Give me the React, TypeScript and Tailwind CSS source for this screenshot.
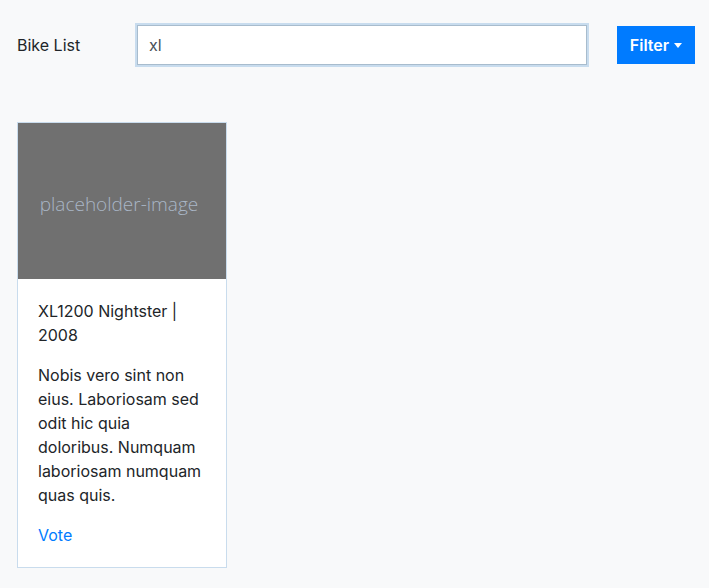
export default function App() {
  return (
    <div className="min-h-screen bg-[#f8f9fa] text-[#212529] font-['Inter',sans-serif] text-base leading-6">
      {/* Top bar */}
      <div className="flex items-center px-[17px] pt-[23px]">
        <span className="w-[118px] shrink-0">Bike List</span>
        <div className="w-[454px] h-[44px] shrink-0 p-[2px] bg-[#c8dcee]">
          <input
            className="w-full h-full bg-white border border-[#a8bccd] px-[11px] outline-none text-[#495057]"
            defaultValue="xl"
          />
        </div>
        <button className="ml-[28px] w-[78px] h-[38px] shrink-0 bg-[#007bff] text-white font-semibold flex items-center justify-center gap-[5px]">
          Filter
          <span className="w-0 h-0 border-x-[4px] border-x-transparent border-t-[5px] border-t-white" />
        </button>
      </div>

      {/* Cards */}
      <div className="px-[17px] pt-[55px] pb-[20px]">
        <div className="w-[210px] bg-white border border-[#c9dced]">
          <div className="h-[156px] bg-[#707070] flex items-center justify-center pt-[5px] pr-[6px]">
            <span className="text-[19px] text-[#a9b6c6] font-['Open_Sans',sans-serif] font-light">
              placeholder-image
            </span>
          </div>
          <div className="p-5">
            <p className="mb-4">XL1200 Nightster | 2008</p>
            <p className="mb-4">
              Nobis vero sint non eius. Laboriosam sed odit hic quia doloribus. Numquam laboriosam numquam quas quis.
            </p>
            <a href="#" className="text-[#007bff]">Vote</a>
          </div>
        </div>
      </div>
    </div>
  );
}
